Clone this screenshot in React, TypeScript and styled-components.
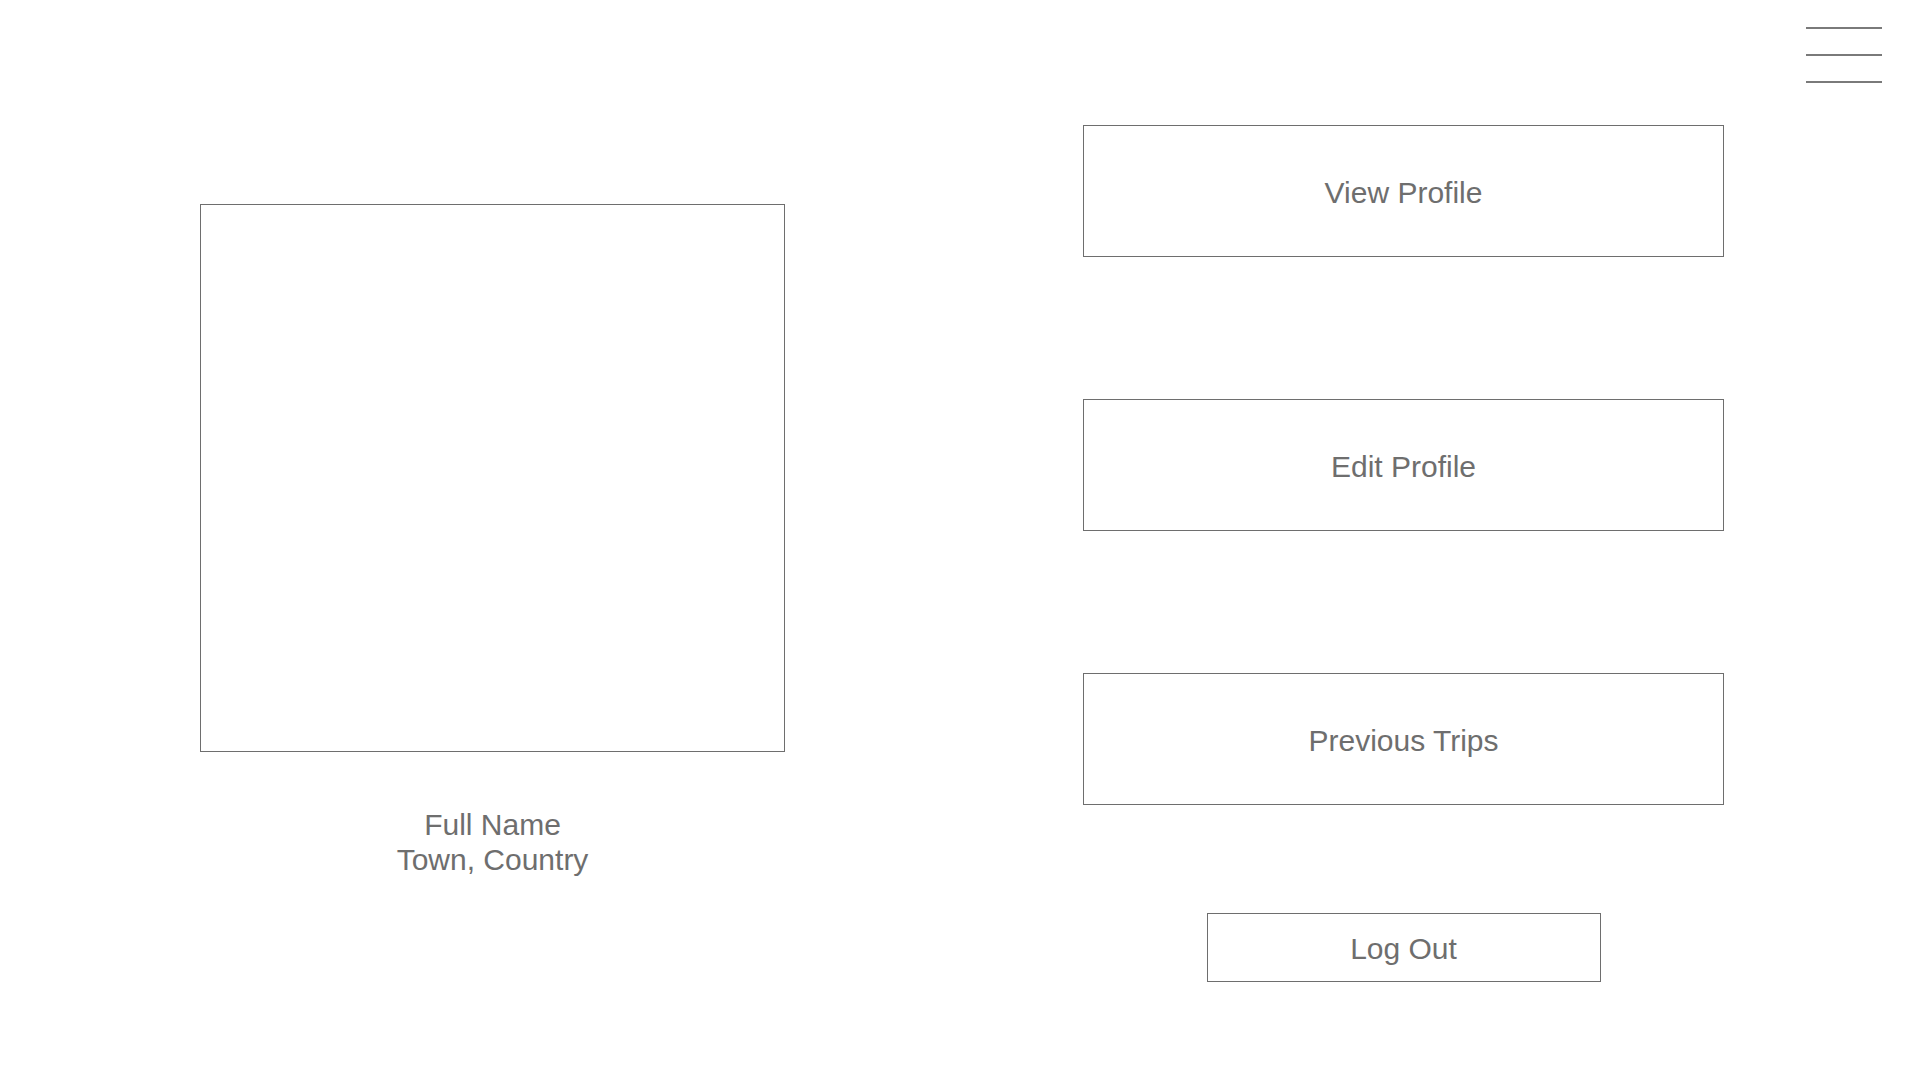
import styled, { createGlobalStyle } from "styled-components";

const GlobalStyle = createGlobalStyle`
  html, body {
    margin: 0;
    padding: 0;
    background: #ffffff;
  }
  body {
    font-family: "Liberation Sans", Arial, Helvetica, sans-serif;
  }
`;

const Page = styled.div`
  position: relative;
  width: 1920px;
  height: 1080px;
  box-sizing: border-box;
  padding: 125px 0 0 200px;
  display: flex;
  align-items: flex-start;
  background: #ffffff;
  color: #6e6e6e;
`;

const Menu = styled.button`
  position: absolute;
  top: 27px;
  right: 38px;
  width: 76px;
  padding: 0;
  border: none;
  background: none;
  display: flex;
  flex-direction: column;
  gap: 25px;
  cursor: pointer;
`;

const MenuLine = styled.span`
  display: block;
  height: 2px;
  background: #7a7a7a;
`;

const ProfileColumn = styled.section`
  width: 585px;
  margin-top: 79px;
  display: flex;
  flex-direction: column;
  align-items: center;
`;

const Photo = styled.div`
  width: 100%;
  height: 548px;
  box-sizing: border-box;
  border: 1px solid #6e6e6e;
`;

const Caption = styled.div`
  margin-top: 55px;
  font-size: 30px;
  line-height: 35px;
  text-align: center;
`;

const ActionColumn = styled.nav`
  width: 641px;
  margin-left: 298px;
  display: flex;
  flex-direction: column;
  align-items: center;
  gap: 142px;
`;

const ActionButton = styled.button<{ $small?: boolean }>`
  width: ${(p) => (p.$small ? "394px" : "100%")};
  height: ${(p) => (p.$small ? "69px" : "132px")};
  margin-top: ${(p) => (p.$small ? "-34px" : "0")};
  box-sizing: border-box;
  border: 1px solid #6e6e6e;
  background: #ffffff;
  color: #6e6e6e;
  font-family: "Liberation Sans", Arial, Helvetica, sans-serif;
  font-size: 30px;
  padding: 3px 0 0;
  display: flex;
  align-items: center;
  justify-content: center;
  cursor: pointer;
`;

const actions = ["View Profile", "Edit Profile", "Previous Trips"];

function App() {
  return (
    <>
      <GlobalStyle />
      <Page>
        <Menu aria-label="Menu">
          <MenuLine />
          <MenuLine />
          <MenuLine />
        </Menu>
        <ProfileColumn>
          <Photo />
          <Caption>
            Full Name
            <br />
            Town, Country
          </Caption>
        </ProfileColumn>
        <ActionColumn>
          {actions.map((label) => (
            <ActionButton key={label}>{label}</ActionButton>
          ))}
          <ActionButton $small>Log Out</ActionButton>
        </ActionColumn>
      </Page>
    </>
  );
}

export default App;
